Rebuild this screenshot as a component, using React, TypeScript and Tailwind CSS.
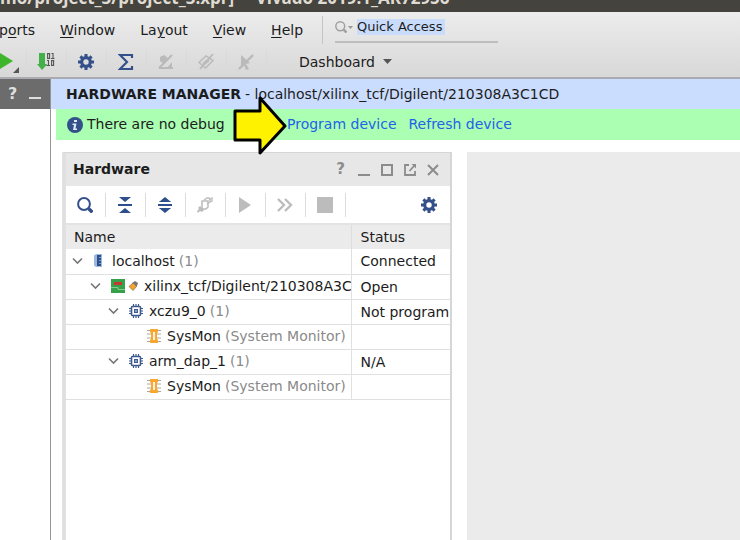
import React from "react";

const FONT = "font-['DejaVu_Sans',sans-serif]";

function Gear({ className = "" }: { className?: string }) {
  return (
    <svg viewBox="0 0 16 16" className={`size-4 ${className}`} fill="none" stroke="currentColor">
      <circle cx="8" cy="8" r="4.300" strokeWidth="3.200" />
      <g strokeWidth="3">
        <path d="M8 0v3M8 13v3M0 8h3M13 8h3" />
        <path d="M2.400 2.400l2 2M11.600 11.600l2 2M13.600 2.400l-2 2M4.400 11.600l-2 2" />
      </g>
    </svg>
  );
}

function Search({ className = "" }: { className?: string }) {
  return (
    <svg viewBox="0 0 16 16" className={className} fill="none" stroke="currentColor">
      <circle cx="7" cy="7" r="5.900" strokeWidth="2" />
      <path d="M11 11l2 2" strokeWidth="2" />
      <path d="M12 12l3.400 3.400" strokeWidth="3.400" />
    </svg>
  );
}

function Chevron() {
  return (
    <svg viewBox="0 0 11 8" className="h-2 w-[11px]" fill="none" stroke="#777" strokeWidth="1.600">
      <path d="M1 1.500l4.500 4.500L10 1.500" />
    </svg>
  );
}

function Chip() {
  return (
    <svg viewBox="0 0 14 14" className="size-3.5" fill="none" stroke="#3f5a90">
      <rect x="2.500" y="2.500" width="9" height="9" rx="1" strokeWidth="1.600" />
      <rect x="5.500" y="5.500" width="3" height="3" fill="#8fa2c6" />
      <path d="M4.500 0v2M7 0v2M9.500 0v2M4.500 12v2M7 12v2M9.500 12v2M0 4.500h2M0 7h2M0 9.500h2M12 4.500h2M12 7h2M12 9.500h2" strokeWidth="1.200" />
    </svg>
  );
}

function Monitor() {
  return (
    <svg viewBox="0 0 14 14" className="size-3.5" fill="none">
      <path d="M0 1.500h14M0 5h14M0 9h14M0 12.500h14" stroke="#aaa89c" />
      <path d="M3 0h8v3l-1 1v6l1 1v3H3v-3l1-1V4L3 3z" fill="#faa732" />
      <path d="M6 3h2v8H6z" fill="#fff3da" />
    </svg>
  );
}

function Host() {
  return (
    <svg viewBox="0 0 8 13" className="h-[13px] w-2">
      <path d="M0 1.500L2 0h6v13H2l-2-1.500z" fill="#9db8dd" />
      <path d="M3 1h4v11H3z" fill="#2d4f8c" />
      <path d="M5 3.500h2M5 6.500h2M5 9.500h2" stroke="#7f9dc9" />
    </svg>
  );
}

function Board() {
  return (
    <svg viewBox="0 0 27 14" className="h-3.5 w-[27px]">
      <path d="M0 0h14v14H0z" fill="#35a14a" />
      <path d="M3 3h8v3H3z" fill="#c23a30" />
      <path d="M0 8.500h7v2h7" fill="none" stroke="#8ccb8e" />
      <path d="M21 4l3-2 3 2-1 3-3 2z" fill="#777" />
      <path d="M22 4l3.500 3.500-3.500 4-4-4z" fill="#f5a32a" stroke="#8f7a55" strokeWidth=".8" />
    </svg>
  );
}

function WindowControls() {
  const button = "flex size-[23px] items-center justify-center text-[#8c8c8c]";
  const svg = "size-3";
  return (
    <div className="flex">
      <button aria-label="Help" className={`${button} text-[15px] font-bold`}>?</button>
      <button aria-label="Minimize" className={button}>
        <svg viewBox="0 0 12 12" className={svg}><path d="M0 11h12" stroke="currentColor" strokeWidth="2" /></svg>
      </button>
      <button aria-label="Maximize" className={button}>
        <svg viewBox="0 0 12 12" className={svg}><path d="M1 1h10v10H1z" fill="none" stroke="currentColor" strokeWidth="2" /></svg>
      </button>
      <button aria-label="Float" className={button}>
        <svg viewBox="0 0 12 12" className={svg} fill="none" stroke="currentColor">
          <path d="M5 1H1v10h10V7" strokeWidth="1.800" />
          <path d="M5.500 7L10 2" strokeWidth="1.800" />
          <path d="M7.500 0H12v4.500z" fill="currentColor" stroke="none" />
        </svg>
      </button>
      <button aria-label="Close" className={button}>
        <svg viewBox="0 0 12 12" className={svg}><path d="M1 1l10 10M11 1L1 11" stroke="currentColor" strokeWidth="2" /></svg>
      </button>
    </div>
  );
}

const mainTools: { label: string; icon: React.ReactNode }[] = [
  {
    label: "Generate bitstream",
    icon: (
      <svg viewBox="0 0 18 17" className="h-[17px] w-[18px]" fill="none">
        <path d="M2 0h6v11h2.500L5 17 0 11h2z" fill="#43b049" />
        <path d="M10.600.600h2v4.800h-2zM14.500.500h1.500v5M14 5.500h3.500M10 7.500h1.500v5M9.500 12.500h3.500M14.600 7.600h2v4.800h-2z" stroke="#555" strokeWidth="1.100" />
      </svg>
    ),
  },
  { label: "Settings", icon: <Gear className="text-[#34508a]" /> },
  {
    label: "Report",
    icon: (
      <svg viewBox="0 0 16 16" className="size-4" fill="none">
        <path d="M14 4V1H2l7 7-7 7h12v-3" stroke="#34508a" strokeWidth="2.200" />
      </svg>
    ),
  },
  {
    label: "Hide marks",
    icon: (
      <svg viewBox="0 0 16 16" className="size-4">
        <path d="M2 3l4-2 5 4-5 5-4-3zM9 14l5-6v6zM1 13h14v2H1z" fill="#bababa" />
        <path d="M1 14L14 1" stroke="#bababa" strokeWidth="2.200" />
      </svg>
    ),
  },
  {
    label: "Unlink",
    icon: (
      <svg viewBox="0 0 16 16" className="size-4" fill="none" stroke="#bababa">
        <path d="M1 8.500L8 2l7 4.500L7.500 14z" strokeWidth="1.400" />
        <path d="M5 9l5-4 1 2-5 4z" fill="#bababa" />
        <path d="M2 15L15 0" strokeWidth="1.800" />
      </svg>
    ),
  },
  {
    label: "Clear selection",
    icon: (
      <svg viewBox="0 0 16 16" className="size-4">
        <path d="M3 1l9 8-4 1 3 5-3 1-2-5-3 3z" fill="#bababa" />
        <path d="M1 15L15 1" stroke="#bababa" strokeWidth="2.400" />
      </svg>
    ),
  },
];

const panelTools: { label: string; icon: React.ReactNode }[] = [
  { label: "Search", icon: <Search className="size-4 text-[#34508a]" /> },
  {
    label: "Collapse all",
    icon: (
      <svg viewBox="0 0 14 16" className="h-4 w-3.5" fill="#2d4f8c">
        <path d="M1 0h12L7 5zM0 7h14v2H0zM7 11l6 5H1z" />
      </svg>
    ),
  },
  {
    label: "Expand all",
    icon: (
      <svg viewBox="0 0 14 16" className="h-4 w-3.5" fill="#2d4f8c">
        <path d="M7 0l6 5H1zM0 7h14v2H0zM1 11h12l-6 5zM1 4.500h12V5H1zM1 11h12v.500H1z" />
      </svg>
    ),
  },
  {
    label: "Auto connect",
    icon: (
      <svg viewBox="0 0 16 16" className="size-4" fill="none" stroke="#bcbcbc">
        <path d="M5 4h6v6l-2 2H5V8z" strokeWidth="1.500" />
        <path d="M7 3l3-2h2l1 1v3l-3 2M12 3l3-2v3l-2 1" strokeWidth="1.300" />
        <path d="M3 9l4 4-2 2-2-1-2 2-1-2 2-2-1-1z" fill="#bcbcbc" stroke="none" />
      </svg>
    ),
  },
  {
    label: "Run trigger",
    icon: <svg viewBox="0 0 14 16" className="h-4 w-3.5"><path d="M1 0l12 8-12 8z" fill="#bcbcbc" /></svg>,
  },
  {
    label: "Run immediately",
    icon: (
      <svg viewBox="0 0 16 14" className="h-3.5 w-4" fill="none" stroke="#bcbcbc" strokeWidth="2.400">
        <path d="M1 1l6 6-6 6M8 1l6 6-6 6" />
      </svg>
    ),
  },
  { label: "Stop trigger", icon: <span className="block size-4 bg-[#bcbcbc]" /> },
];

function MenuItem({ label, mark = 0 }: { label: string; mark?: number }) {
  return (
    <button className="whitespace-nowrap leading-5">
      {label.slice(0, mark)}
      <span className="underline underline-offset-2">{label[mark]}</span>
      {label.slice(mark + 1)}
    </button>
  );
}

type Row = { indent: string; open: boolean; icon: React.ReactNode; name: string; note?: string; status?: string };

const rows: Row[] = [
  { indent: "pl-1.5", open: true, icon: <span className="ml-px mr-1 block"><Host /></span>, name: "localhost", note: "(1)", status: "Connected" },
  { indent: "pl-6", open: true, icon: <Board />, name: "xilinx_tcf/Digilent/210308A3C1CD", status: "Open" },
  { indent: "pl-[42px]", open: true, icon: <Chip />, name: "xczu9_0", note: "(1)", status: "Not programmed" },
  { indent: "pl-[81px]", open: false, icon: <Monitor />, name: "SysMon", note: "(System Monitor)" },
  { indent: "pl-[42px]", open: true, icon: <Chip />, name: "arm_dap_1", note: "(1)", status: "N/A" },
  { indent: "pl-[81px]", open: false, icon: <Monitor />, name: "SysMon", note: "(System Monitor)" },
];

function HardwarePanel() {
  return (
    <section className="flex w-[390px] shrink-0 flex-col border-l-4 border-r-2 border-t border-[#d6d6d6] border-l-[#e0e0e0] bg-white">
      <header className="flex h-[33px] items-center justify-between bg-[#e7e7e7] pl-[7px] pr-1.5">
        <h2 className="font-bold">Hardware</h2>
        <WindowControls />
      </header>
      <div className="flex h-[39px] items-center justify-between border-b-2 border-[#e3e3e3] pr-3">
        <div className="flex">
          {panelTools.map((t) => (
            <button key={t.label} aria-label={t.label} className="flex h-6 w-10 items-center justify-center border-r border-[#dcdcdc] pr-px">
              {t.icon}
            </button>
          ))}
        </div>
        <button aria-label="Panel settings" className="pr-px"><Gear className="text-[#34508a]" /></button>
      </div>
      <table className="w-full table-fixed border-collapse text-left">
        <thead>
          <tr className="h-6 bg-[#ebebeb]">
            <th className="w-[285px] border-r border-[#dedede] pl-2 font-normal leading-5">Name</th>
            <th className="pl-[9px] font-normal leading-5">Status</th>
          </tr>
        </thead>
        <tbody>
          {rows.map((r, i) => (
            <tr key={i} className="h-[25px] border-b border-[#e0e0e0]">
              <td className="overflow-hidden border-r border-[#e0e0e0] p-0">
                <div className={`flex items-center overflow-hidden whitespace-nowrap pb-px leading-5 ${r.indent}`}>
                  {r.open && <button aria-label={`Collapse ${r.name}`} className="mr-2.5 shrink-0"><Chevron /></button>}
                  <span className="mr-1.5 shrink-0">{r.icon}</span>
                  <span className="min-w-0 overflow-hidden">{r.name}</span>
                  {r.note && <span className="ml-1 text-[#8a8a8a]">{r.note}</span>}
                </div>
              </td>
              <td className="overflow-hidden whitespace-nowrap py-0 pl-[9px] pr-0 leading-5">{r.status}</td>
            </tr>
          ))}
        </tbody>
      </table>
    </section>
  );
}

export default function App() {
  return (
    <div className={`flex h-screen flex-col overflow-hidden bg-white text-[14px] text-[#1c1c1c] ${FONT}`}>
      <div className="flex h-3 shrink-0 items-end overflow-hidden bg-[#45433d] font-['Open_Sans',sans-serif] text-[17px] font-bold text-[#dfdbd2]">
        <div className="mb-1 flex gap-2 whitespace-pre leading-5">
          <span>mo/project_3/project_3.xpr]</span><span>-</span><span>Vivado 2019.1_AR72956</span>
        </div>
      </div>

      <div className="flex shrink-0 flex-col border-b-2 border-[#a9abb0] bg-linear-to-b from-[#ececec] to-[#d8d8d8]">
        <div className="flex h-9 items-center">
          <nav className="-ml-px flex gap-[25px]">
            <MenuItem label="ports" mark={1} />
            <MenuItem label="Window" />
            <MenuItem label="Layout" mark={2} />
            <MenuItem label="View" />
            <MenuItem label="Help" />
          </nav>
          <div className="ml-[19px] h-7 w-px bg-[#c4c4c4]" />
          <label className="ml-3 flex h-[26px] w-[163px] items-center border-b-2 border-[#bdbdbd] pb-1">
            <Search className="size-3 text-[#a0a0a0]" />
            <svg viewBox="0 0 5 3" className="ml-px mr-1 h-[3px] w-[5px]"><path d="M0 0h5L2.500 3z" fill="#999" /></svg>
            <input aria-label="Quick Access" defaultValue="Quick Access" className="h-4 w-[88px] bg-[#c9dcfc] text-[13px] leading-4 outline-none" />
          </label>
        </div>
        <div className="flex h-[29px] items-center pb-0.5">
          <button aria-label="Run" className="flex h-6 w-[27px] items-center border-r border-[#d9d9d9]">
            <svg viewBox="0 0 19 22" className="h-[22px] w-[19px]"><path d="M0 2l13 8-13 8z" fill="#3fb52c" /><path d="M19 16v6h-6z" fill="#555" /></svg>
          </button>
          {mainTools.map((t) => (
            <button key={t.label} aria-label={t.label} className="flex h-6 w-10 items-center justify-center border-r border-[#d9d9d9] pr-px">
              {t.icon}
            </button>
          ))}
          <button className="ml-8 flex items-center gap-2 leading-5">
            Dashboard
            <svg viewBox="0 0 9 5" className="h-[5px] w-[9px]"><path d="M0 0h9L4.500 5z" fill="#555" /></svg>
          </button>
        </div>
      </div>

      <div className="flex min-h-0 flex-1">
        <aside className="w-[51px] shrink-0 border-r border-[#949494] bg-white">
          <div className="flex h-[30px] items-center gap-3 bg-[#6c6c6c] pl-2 text-[#dedede]">
            <button aria-label="Help" className="text-[16px] font-bold">?</button>
            <button aria-label="Minimize"><span className="mt-2 block h-0.5 w-3 bg-[#dedede]" /></button>
          </div>
        </aside>
        <main className="flex min-w-0 flex-1 flex-col">
          <h1 className="flex h-[30px] shrink-0 items-center gap-1 whitespace-nowrap bg-[#cbddff] pb-px pl-[15px] leading-5">
            <b>HARDWARE MANAGER</b><span>- localhost/xilinx_tcf/Digilent/210308A3C1CD</span>
          </h1>
          <div className="relative ml-[5px] flex h-[31px] shrink-0 items-center whitespace-nowrap bg-[#abffb2] pl-[11px]">
            <svg viewBox="0 0 16 16" className="mr-1 size-4">
              <circle cx="8" cy="8" r="8" fill="#34508a" />
              <path d="M7 3h3v2H7zM5.500 6.500h4l-1 5H10V13H6l1-5H5.500z" fill="#dceaf0" />
            </svg>
            <span className="w-[200px]">There are no debug</span>
            <a href="#program" className="text-[#1f62e8]">Program device</a>
            <a href="#refresh" className="ml-3 text-[#1f62e8]">Refresh device</a>
            <svg viewBox="0 0 56 62" className="absolute -top-[15px] left-44 h-[62px] w-14">
              <path d="M3 17h25V4l25 28-25 27V46H3z" fill="#fff200" stroke="#000" strokeWidth="3" strokeLinejoin="round" />
            </svg>
          </div>
          <div className="flex min-h-0 flex-1 gap-[15px] pl-[11px] pt-3">
            <HardwarePanel />
            <div className="flex-1 bg-[#ebebeb]" />
          </div>
        </main>
      </div>
    </div>
  );
}
